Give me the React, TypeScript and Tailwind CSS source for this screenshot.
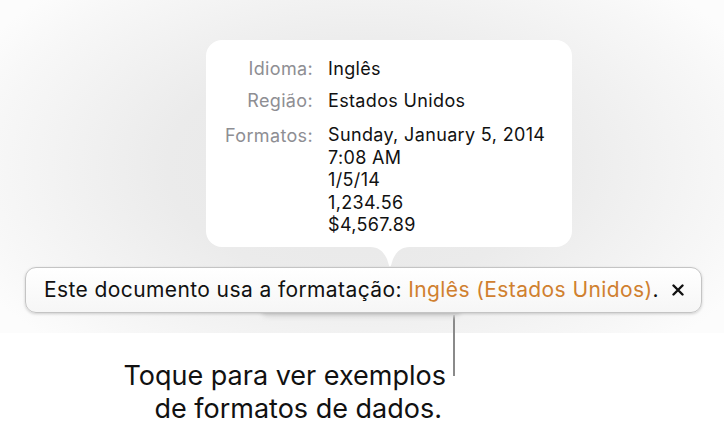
import React from "react";

export default function App() {
  return (
    <div className="relative w-[724px] h-[436px] overflow-hidden bg-white" style={{ fontFamily: "Inter, 'Liberation Sans', sans-serif" }}>
      <div className="h-[333px] pt-[40px] bg-[radial-gradient(ellipse_60%_75%_at_50%_50%,#e7e7e7_0%,#ebebeb_45%,#f7f7f7_85%,#fcfcfc_100%)]">
        {/* popover */}
        <div className="relative ml-[206px] w-[366px] h-[207px] rounded-[16px] bg-white pt-[17px]">
          <div className="grid grid-cols-[107px_1fr] gap-x-[15px] text-[18px] leading-[23px] tracking-[0.35px]">
            <div className="text-right text-[#8e8e93]">Idioma:</div>
            <div className="text-[#111]">Inglês</div>
            <div className="mt-[9px] text-right text-[#8e8e93]">Região:</div>
            <div className="mt-[9px] text-[#111]">Estados Unidos</div>
            <div className="mt-[12px] text-right text-[#8e8e93]">Formatos:</div>
            <div className="mt-[12px] text-[#111] leading-[22.5px]">
              <div>Sunday, January 5, 2014</div>
              <div>7:08 AM</div>
              <div>1/5/14</div>
              <div>1,234.56</div>
              <div>$4,567.89</div>
            </div>
          </div>
          <svg className="absolute left-[164px] top-full" width="40" height="21" viewBox="0 0 40 21">
            <path d="M0 0 C10 0 14 6 17 12 L19 18.5 Q20 20.5 21 18.5 L23 12 C26 6 30 0 40 0 Z" fill="#ffffff" />
          </svg>
        </div>
        {/* bar */}
        <div className="relative mt-[20px] ml-[25px] w-[677px]">
          <div className="absolute left-[236px] top-[36px] w-[200px] h-[14px] rounded-[8px] bg-[#d9d9d9] blur-[2px]" />
          <div className="relative flex h-[46px] items-center rounded-[11px] border border-[#c4c4c4] bg-[linear-gradient(#ffffff,#f6f6f6)] pl-[18px] pr-[17px] shadow-[0_1px_3px_rgba(0,0,0,0.18)]">
            <span className="text-[21px] tracking-[0.4px] text-[#111] whitespace-nowrap">
              Este documento usa a formatação: <span className="text-[#d0802f]">Inglês (Estados Unidos)</span>.
            </span>
            <svg className="ml-auto" width="12" height="12" viewBox="0 0 12 12">
              <path d="M1.5 1.5 L10.5 10.5 M10.5 1.5 L1.5 10.5" stroke="#111" strokeWidth="2.4" strokeLinecap="round" />
            </svg>
          </div>
        </div>
      </div>
      {/* callout */}
      <div className="flex">
        <div className="ml-[110px] w-[336px] pt-[26px] text-right text-[27px] leading-[33px] text-[#111]">
          <div>Toque para ver exemplos</div>
          <div className="mr-[4px]">de formatos de dados.</div>
        </div>
        <div className="ml-[7px] -mt-[18px] h-[61px] w-[2px] bg-[#8a8a8a]" />
      </div>
    </div>
  );
}
